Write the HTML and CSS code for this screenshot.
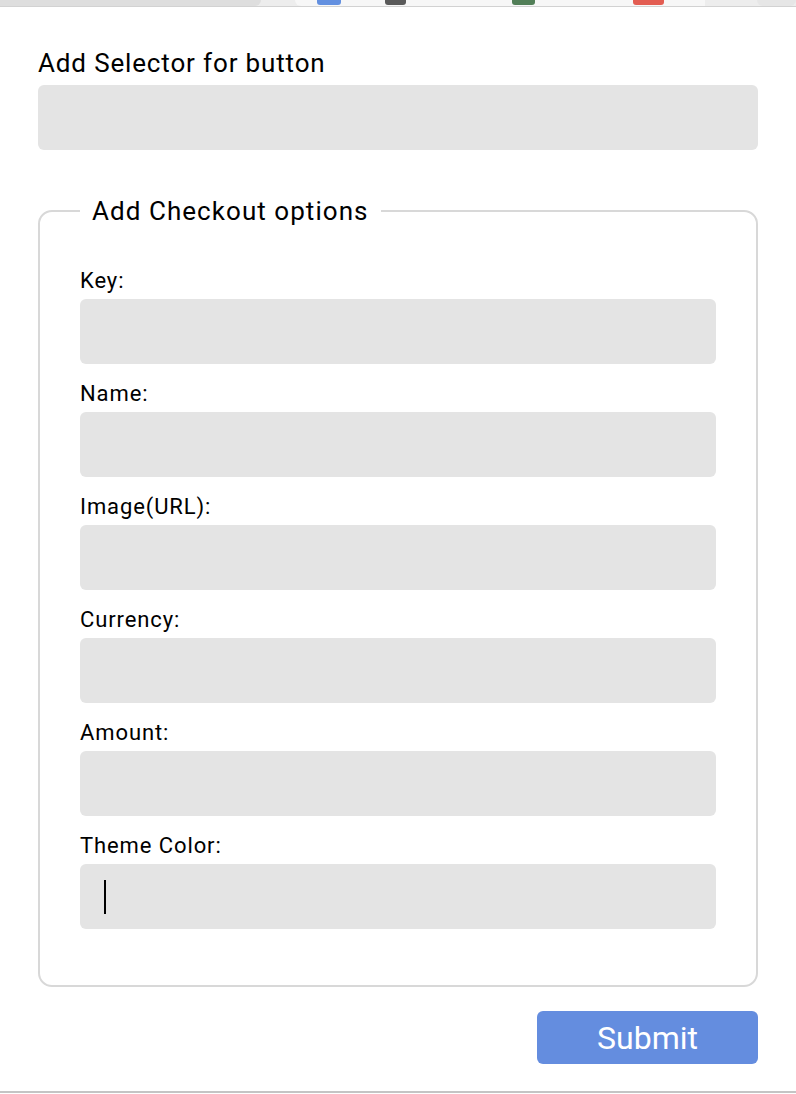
FILE: index.html
```html
<!DOCTYPE html>
<html>
<head>
<meta charset="utf-8">
<link rel="stylesheet" href="styles.css">
</head>
<body>
<div class="chrome">
  <div class="chrome-left"></div>
  <div class="chrome-tabs">
    <span class="ico ico-blue"></span>
    <span class="ico ico-dark"></span>
    <span class="ico ico-green"></span>
    <span class="ico ico-red"></span>
  </div>
  <div class="chrome-circle"></div>
</div>
<main class="page">
  <label class="big-label">Add Selector for button</label>
  <div class="field"></div>
  <fieldset class="options">
    <legend class="legend">Add Checkout options</legend>
    <label class="small-label">Key:</label>
    <div class="field"></div>
    <label class="small-label">Name:</label>
    <div class="field"></div>
    <label class="small-label">Image(URL):</label>
    <div class="field"></div>
    <label class="small-label">Currency:</label>
    <div class="field"></div>
    <label class="small-label">Amount:</label>
    <div class="field"></div>
    <label class="small-label">Theme Color:</label>
    <div class="field field-focus"><span class="caret"></span></div>
  </fieldset>
  <div class="actions">
    <button class="submit">Submit</button>
  </div>
</main>
<div class="bottom-line"></div>
</body>
</html>
```

FILE: styles.css
```css
html, body {
  margin: 0;
  padding: 0;
  background: #ffffff;
}
body {
  font-family: Roboto, "Liberation Sans", sans-serif;
  color: #000;
  width: 796px;
}
.chrome {
  height: 6px;
  border-bottom: 1px solid #d2d2d2;
  background: #ededed;
  display: flex;
  overflow: hidden;
}
.chrome-left {
  width: 268px;
  height: 6px;
  background: #dedede;
  border-bottom-right-radius: 14px;
}
.chrome-tabs {
  margin-left: 34px;
  width: 420px;
  height: 6px;
  background: #f7f7f7;
  border-bottom-left-radius: 12px;
  display: flex;
}
.ico {
  height: 5px;
  border-radius: 0 0 3px 3px;
}
.ico-blue { background: #6390e0; width: 24px; margin-left: 22px; }
.ico-dark { background: #5a5a5a; width: 21px; margin-left: 44px; }
.ico-green { background: #527f58; width: 23px; margin-left: 106px; }
.ico-red { background: #e35d52; width: 31px; margin-left: 98px; }
.chrome-circle {
  margin-left: 52px;
  width: 40px;
  height: 6px;
  background: #e6e6e6;
  border-radius: 0 0 20px 20px;
}
.page {
  padding: 0 38px;
  display: flex;
  flex-direction: column;
}
.big-label {
  display: block;
  font-size: 26px;
  letter-spacing: 0.85px;
  line-height: 30px;
  margin-top: 41px;
  margin-bottom: 7px;
  color: #000;
}
.field {
  height: 65px;
  background: #e4e4e4;
  border-radius: 6px;
  display: flex;
  align-items: center;
}
.options {
  margin: 46px 0 0 0;
  border: 2px solid #d8d8d8;
  border-radius: 14px;
  padding: 0 40px 56px 40px;
  display: flex;
  flex-direction: column;
}
.legend {
  font-size: 26px;
  letter-spacing: 1.05px;
  line-height: 30px;
  padding: 0 12px;
  margin-left: 0;
  color: #000;
}
.small-label {
  display: block;
  font-size: 22px;
  letter-spacing: 0.9px;
  line-height: 24px;
  margin-bottom: 6px;
  margin-top: 18px;
  color: #000;
}
.legend + .small-label {
  margin-top: 43px;
}
.caret {
  display: block;
  width: 2px;
  height: 34px;
  background: #000;
  margin-left: 24px;
}
.actions {
  display: flex;
  justify-content: flex-end;
  margin-top: 24px;
}
.submit {
  width: 221px;
  height: 53px;
  border: none;
  border-radius: 6px;
  background: #648ddf;
  color: #fff;
  font-family: Roboto, "Liberation Sans", sans-serif;
  font-size: 32px;
  padding: 0;
}
.bottom-line {
  margin-top: 27px;
  height: 2px;
  background: #c4c4c4;
}
```
